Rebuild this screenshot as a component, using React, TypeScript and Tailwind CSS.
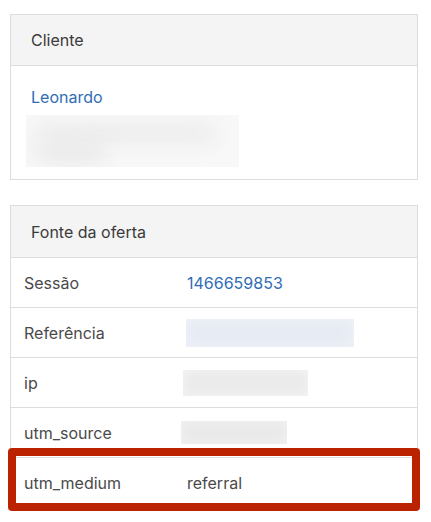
import { FC, ReactNode } from "react";

const Blur: FC<{ className: string; tint: string }> = ({ className, tint }) => (
    <div className={`overflow-hidden ${className}`}>
        <div className={`h-full w-full blur-[6px] ${tint}`} />
    </div>
);

const Row: FC<{ label: string; children: ReactNode }> = ({ label, children }) => (
    <div className="flex h-[50px] items-center border-t border-[#dddddd]">
        <div className="w-[176px] shrink-0 pl-[13px] text-[#4a4a4a]">{label}</div>
        <div className="flex flex-1 items-center">{children}</div>
    </div>
);

export default function App() {
    return (
        <div className="min-h-[522px] bg-white pt-[14px] text-[16px] font-['Inter',sans-serif]">
            <div className="mx-[10px] w-[408px] border border-[#dddddd]">
                <div className="flex h-[50px] items-center bg-[#f4f4f4] pl-[20px] text-[#3a3a3a]">
                    Cliente
                </div>
                <div className="h-[114px] border-t border-[#dddddd] pt-[20px]">
                    <div className="pl-[20px] leading-[22px] text-[#2f6db5]">Leonardo</div>
                    <div className="ml-[15px] mt-[7px] h-[52px] w-[213px] overflow-hidden bg-[#f8f8f8]">
                        <div className="ml-[10px] mt-[10px] h-[16px] w-[180px] rounded-full bg-[#e9e9e9] blur-[10px]" />
                        <div className="ml-[10px] mt-[4px] h-[16px] w-[70px] rounded-full bg-[#e6e6e6] blur-[10px]" />
                    </div>
                </div>
            </div>

            <div className="relative mx-[10px] mt-[25px] w-[408px] border border-[#dddddd]">
                <div className="flex h-[51px] items-center bg-[#f4f4f4] pl-[20px] text-[#3a3a3a]">
                    Fonte da oferta
                </div>
                <Row label="Sessão">
                    <span className="text-[#2f6db5]">1466659853</span>
                </Row>
                <Row label="Referência">
                    <Blur className="-ml-[1px] h-[28px] w-[168px] bg-[#f1f4f8]" tint="bg-[#e6ebf3]" />
                </Row>
                <Row label="ip">
                    <Blur className="-ml-[4px] h-[26px] w-[125px] bg-[#f5f5f5]" tint="bg-[#eaeaea]" />
                </Row>
                <Row label="utm_source">
                    <Blur className="-ml-[6px] h-[23px] w-[106px] bg-[#f3f3f3]" tint="bg-[#e9e9e9]" />
                </Row>
                <Row label="utm_medium">
                    <span className="text-[#4a4a4a]">referral</span>
                </Row>
                <div className="absolute bottom-[-4px] left-[-3px] h-[63px] w-[412px] rounded-[4px] border-[8px] border-[#bb2200]" />
            </div>
        </div>
    );
}
